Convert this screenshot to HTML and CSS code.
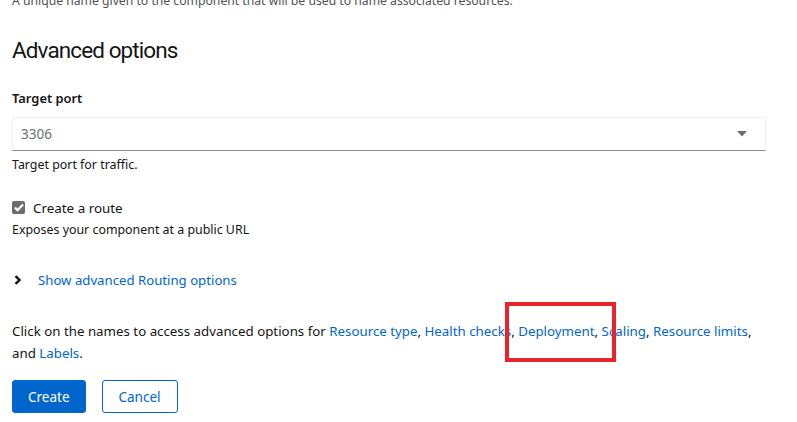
FILE: index.html
```html
<!DOCTYPE html>
<html>
<head>
<meta charset="utf-8">
<link rel="stylesheet" href="styles.css">
</head>
<body>
<div class="page">
  <p class="helper top">A unique name given to the component that will be used to name associated resources.</p>
  <h2 class="heading">Advanced options</h2>
  <div class="field">
    <label class="label">Target port</label>
    <div class="select">
      <span class="select-value">3306</span>
      <svg class="caret" width="10" height="6" viewBox="0 0 10 6"><path d="M0 0h10L5 5.5z" fill="#6a6e73"/></svg>
    </div>
    <p class="helper">Target port for traffic.</p>
  </div>
  <div class="check-field">
    <div class="check-row">
      <span class="checkbox"><svg width="10" height="9" viewBox="0 0 10 9"><path d="M1 4.6l2.6 2.6L9 1.6" stroke="#fff" stroke-width="2.2" fill="none"/></svg></span>
      <span class="check-label">Create a route</span>
    </div>
    <p class="helper">Exposes your component at a public URL</p>
  </div>
  <div class="expand">
    <svg class="chev" width="8" height="10" viewBox="0 0 8 10"><path d="M1.5 1.2L5.5 5l-4 3.8" stroke="#151515" stroke-width="2.4" fill="none"/></svg>
    <a class="link">Show advanced Routing options</a>
  </div>
  <p class="info">Click on the names to access advanced options for <a class="link">Resource type</a>, <a class="link">Health checks</a>, <a class="link">Deployment</a>, <a class="link">Scaling</a>, <a class="link">Resource limits</a>, and <a class="link">Labels</a>.</p>
  <div class="actions">
    <button class="btn primary">Create</button>
    <button class="btn secondary">Cancel</button>
  </div>
</div>
<div class="highlight"></div>
</body>
</html>
```
FILE: styles.css
```css
html, body {
  margin: 0;
  padding: 0;
  background: #fff;
}
body {
  font-family: "Noto Sans", "Open Sans", sans-serif;
  font-size: 14px;
  color: #151515;
  position: relative;
  overflow: hidden;
  height: 422px;
}
.page {
  padding: 0 31px 0 12px;
  margin-top: -10px;
}
p { margin: 0; }
.helper {
  font-size: 12.4px;
  line-height: 21px;
  color: #151515;
}
.top { color: #4f5255; font-size: 12.2px; }
.heading {
  font-family: Roboto, "Noto Sans", sans-serif;
  font-weight: 400;
  font-size: 22.5px;
  letter-spacing: -0.9px;
  line-height: 30px;
  margin: 24px 0 0;
}
.field { margin-top: 23px; }
.label {
  display: block;
  font-weight: 600;
  font-size: 12.9px;
  line-height: 21px;
}
.select {
  margin-top: 8px;
  height: 32px;
  border: 1px solid #f0f0f0;
  border-bottom: 1px solid #8a8d90;
  display: flex;
  align-items: center;
  justify-content: space-between;
  padding: 0 18px 0 8px;
}
.select-value { color: #6a6e73; font-size: 13.5px; }
.caret { display: block; }
.field .helper { margin-top: 3px; }
.check-field { margin-top: 22px; }
.check-row {
  display: flex;
  align-items: center;
  height: 21px;
}
.checkbox {
  width: 13px;
  height: 13px;
  border-radius: 2px;
  background: #6a6e73;
  display: flex;
  align-items: center;
  justify-content: center;
}
.checkbox svg { display: block; }
.check-label { margin-left: 8px; font-size: 13.4px; }
.check-field .helper { margin-top: 1px; }
.expand {
  margin-top: 29px;
  display: flex;
  align-items: center;
  height: 21px;
}
.chev { display: block; margin-left: 2px; margin-right: 16px; }
.expand .link { font-size: 13.2px; }
.link { color: #06c; text-decoration: none; }
.info {
  margin-top: 30px;
  font-size: 13.3px;
  line-height: 22px;
}
.actions {
  margin-top: 16px;
  display: flex;
  gap: 16px;
}
.btn {
  font-family: "Noto Sans", sans-serif;
  font-size: 13.5px;
  height: 33px;
  border-radius: 3px;
  padding: 0 15px;
  cursor: pointer;
}
.primary {
  background: #06c;
  color: #fff;
  border: 1px solid #06c;
}
.secondary {
  background: #fff;
  color: #06c;
  border: 1px solid #06c;
  padding: 0 16px;
}
.highlight {
  position: absolute;
  left: 505px;
  top: 302px;
  width: 103px;
  height: 52px;
  border: 4px solid #e8232a;
}
```
